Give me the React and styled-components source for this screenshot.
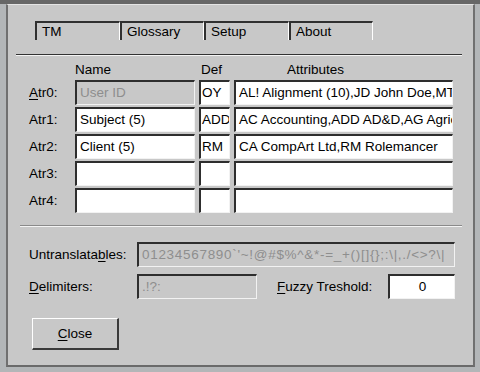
import React from 'react';
import styled, { createGlobalStyle } from 'styled-components';

const GlobalStyle = createGlobalStyle`
	html, body {
		margin: 0;
		padding: 0;
	}
	body {
		font-family: 'Liberation Sans', Arial, sans-serif;
		font-size: 13.5px;
		color: #000;
	}
`;

const Page = styled.div`
	width: 480px;
	height: 372px;
	box-sizing: border-box;
	padding: 4px 5px 5px 6px;
	background: linear-gradient(to bottom, #676767 0, #676767 4px, #b3b6b8 4px);
	display: flex;
`;

const Dialog = styled.div`
	flex: 1;
	display: flex;
	flex-direction: column;
	background: #c8c8c8;
	border-top: 1px solid #e4e4e4;
	border-left: 2px solid #707070;
	border-right: 2px solid #707070;
	border-bottom: 2px solid #6a6a6a;
`;

const TabBar = styled.div`
	display: flex;
	margin: 16px 0 0 27px;
`;

const Tab = styled.div`
	width: ${(p) => p.w}px;
	height: 19px;
	box-sizing: border-box;
	border-top: 2px solid #303030;
	border-left: 2px solid #303030;
	border-right: 1px solid #ffffff;
	padding: 0 0 0 5px;
	line-height: 17px;
	white-space: nowrap;
`;

const Separator = styled.div`
	margin: ${(p) => p.m};
	border-top: 1px solid ${(p) => p.dark};
	border-bottom: 1px solid #f4f4f4;
`;

const AttrGrid = styled.div`
	display: grid;
	grid-template-columns: 42px 120px 31px 219px;
	grid-template-rows: 17px repeat(5, 25px);
	column-gap: 4px;
	row-gap: 2px;
	margin: 5px 0 0 21px;
	align-items: center;
`;

const Header = styled.div`
	padding-left: ${(p) => p.pl || 0}px;
	white-space: nowrap;
	line-height: 17px;
`;

const Label = styled.div`
	white-space: nowrap;
`;

const Key = styled.span`
	text-decoration: underline;
	text-underline-offset: 2px;
`;

const Field = styled.div`
	height: 25px;
	box-sizing: border-box;
	border-top: 2px solid #2e2e2e;
	border-left: 2px solid #2e2e2e;
	border-right: 1px solid #f2f2f2;
	border-bottom: 1px solid #f2f2f2;
	background: ${(p) => (p.disabled ? '#c8c8c8' : '#ffffff')};
	color: ${(p) => (p.disabled ? '#8e8e8e' : '#000000')};
	padding: ${(p) => (p.tight ? '0 0 0 1px' : '0 2px 0 3px')};
	line-height: 22px;
	letter-spacing: ${(p) => (p.spread ? '0.7px' : 'normal')};
	white-space: nowrap;
	overflow: hidden;
	text-align: ${(p) => (p.center ? 'center' : 'left')};
	grid-column: ${(p) => p.span || 'auto'};
`;

const SettingsGrid = styled.div`
	display: grid;
	grid-template-columns: 108px 120px 20px 111px 67px;
	grid-template-rows: 25px 26px;
	row-gap: 6px;
	margin: 15px 0 0 21px;
	align-items: center;
`;

const CloseButton = styled.button`
	width: 87px;
	height: 32px;
	margin: 19px 0 0 24px;
	box-sizing: border-box;
	background: #c8c8c8;
	border-top: 1px solid #ffffff;
	border-left: 1px solid #ffffff;
	border-right: 2px solid #3a3a3a;
	border-bottom: 2px solid #3a3a3a;
	font-family: 'Liberation Sans', Arial, sans-serif;
	font-size: 13.5px;
	color: #000;
	padding: 0;
	cursor: pointer;
`;

const tabs = [
	{ name: 'TM', w: 85 },
	{ name: 'Glossary', w: 84 },
	{ name: 'Setup', w: 85 },
	{ name: 'About', w: 84 },
];

const rows = [
	{ name: 'User ID', def: 'OY', attrs: 'AL! Alignment (10),JD John Doe,MT Maintenance', disabled: true, key: true },
	{ name: 'Subject (5)', def: 'ADD', attrs: 'AC Accounting,ADD AD&D,AG Agriculture,AR Architecture' },
	{ name: 'Client (5)', def: 'RM', attrs: 'CA CompArt Ltd,RM Rolemancer' },
	{ name: '', def: '', attrs: '' },
	{ name: '', def: '', attrs: '' },
];

const App = () => {
	return (
		<Page>
			<GlobalStyle />
			<Dialog>
				<TabBar>
					{tabs.map((t) => (
						<Tab key={t.name} w={t.w}>
							{t.name}
						</Tab>
					))}
				</TabBar>
				<Separator m="14px 11px 0 8px" dark="#333333" />
				<AttrGrid>
					<div />
					<Header>Name</Header>
					<Header pl={2}>Def</Header>
					<Header pl={53}>Attributes</Header>
					{rows.map((r, i) => (
						<React.Fragment key={i}>
							<Label>
								{r.key ? <Key>A</Key> : 'A'}
								{`tr${i}:`}
							</Label>
							<Field disabled={r.disabled}>{r.name}</Field>
							<Field tight>{r.def}</Field>
							<Field>{r.attrs}</Field>
						</React.Fragment>
					))}
				</AttrGrid>
				<Separator m="12px 11px 0 12px" dark="#8a8a8a" />
				<SettingsGrid>
					<Label>
						Untranslata<Key>b</Key>les:
					</Label>
					<Field disabled spread span="2 / 6">
						{'01234567890`\'~!@#$%^&*-=_+()[]{};:\\|,./<>?\\|'}
					</Field>
					<Label>
						<Key>D</Key>elimiters:
					</Label>
					<Field disabled>.!?:</Field>
					<div />
					<Label>
						<Key>F</Key>uzzy Treshold:
					</Label>
					<Field center>0</Field>
				</SettingsGrid>
				<CloseButton>
					<Key>C</Key>lose
				</CloseButton>
			</Dialog>
		</Page>
	);
};

export default App;
